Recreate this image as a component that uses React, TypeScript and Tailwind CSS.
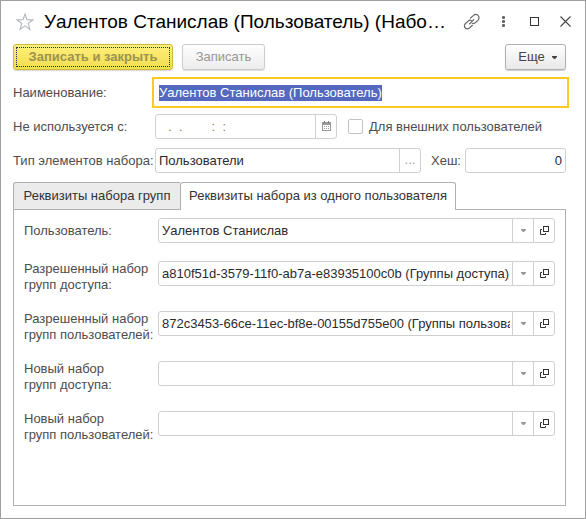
import { useEffect, useRef, type ReactNode } from "react";

const boxClass = "flex h-[25px] min-w-0 overflow-hidden border bg-white";
const plainBoxClass = `${boxClass} rounded-[3px] border-[#d0d0d0]`;
const focusedBoxClass = `${boxClass} border-white outline-2 outline-offset-1 outline-[#fbc926]`;
const fieldClass = "min-w-0 flex-1 bg-transparent pl-[3px] text-[#2b2b2b] outline-none";
const sideButtonClass =
  "flex shrink-0 items-center justify-center border-l border-[#d0d0d0] pb-px";

function StarIcon() {
  return (
    <svg width="18" height="18" viewBox="0 0 18 18" fill="none" stroke="#b3b8bd" strokeWidth="1.1" aria-hidden="true">
      <path d="M9 1 L11 6.8 L16.8 6.9 L12.2 10.5 L13.9 16.4 L9 12.9 L4.1 16.4 L5.8 10.5 L1.2 6.9 L7 6.8 Z" />
    </svg>
  );
}

function LinkIcon() {
  return (
    <svg width="18" height="18" viewBox="0 0 18 18" fill="none" stroke="#666" strokeWidth="1.2" strokeLinecap="round" aria-hidden="true">
      <path d="M7.5 5 L10.3 2.6 C11.5 1.4 13.6 1.1 15 2.4 C16.4 3.7 16.3 5.9 15.1 7.1 L12.3 9.7 C11.5 10.5 10.2 10.7 9.2 10.3" />
      <path d="M9.4 12.3 L6.6 14.9 C5.4 16.1 3.5 16.2 2.3 15 C1.1 13.8 1.1 11.9 2.3 10.7 L5.1 8.1 C6 7.2 7.3 7 8.3 7.5" />
      <path d="M6.6 10.9 L10.8 6.7" />
    </svg>
  );
}

function DotsIcon() {
  return (
    <svg width="3" height="11" viewBox="0 0 3 11" fill="#666" aria-hidden="true">
      <rect width="3" height="3" rx="1" />
      <rect y="4" width="3" height="3" rx="1" />
      <rect y="8" width="3" height="3" rx="1" />
    </svg>
  );
}

function MaximizeIcon() {
  return (
    <svg width="9" height="9" viewBox="0 0 9 9" fill="none" stroke="#333" aria-hidden="true">
      <rect x="0.5" y="0.5" width="8" height="8" />
    </svg>
  );
}

function CloseIcon() {
  return (
    <svg width="11" height="11" viewBox="0 0 11 11" stroke="#444" strokeWidth="1.1" aria-hidden="true">
      <path d="M0.5 0.5 L10.5 10.5 M10.5 0.5 L0.5 10.5" />
    </svg>
  );
}

function CaretIcon() {
  return (
    <svg width="5" height="3" viewBox="0 0 5 3" fill="currentColor" aria-hidden="true">
      <path d="M0 0 H5 V1 L3 3 H2 L0 1 Z" />
    </svg>
  );
}

function CalendarIcon() {
  return (
    <svg width="9" height="10" viewBox="0 0 9 10" aria-hidden="true">
      <path d="M0 1 H9 V10 H0 Z M1 4 V9 H8 V4 Z" fill="#999" fillRule="evenodd" />
      <path d="M2 0 H3 V2 H2 Z M6 0 H7 V2 H6 Z" fill="#777" />
      <path d="M2 5h1v1h-1z M4 5h1v1h-1z M6 5h1v1h-1z M2 7h1v1h-1z M4 7h1v1h-1z M6 7h1v1h-1z" fill="#999" />
    </svg>
  );
}

function OpenIcon() {
  return (
    <svg width="9" height="9" viewBox="0 0 9 9" fill="none" stroke="#333" aria-hidden="true">
      <rect x="3.5" y="0.5" width="5" height="5" />
      <path d="M2 3.5 H0.5 V8.5 H5.5 V7" />
    </svg>
  );
}

function FormRow({ id, label, children }: { id: string; label: string; children: ReactNode }) {
  return (
    <div className="flex items-center">
      <label htmlFor={id} className="w-[142px] shrink-0 whitespace-nowrap">
        {label}
      </label>
      {children}
    </div>
  );
}

function ReferenceRow({ id, lines, value }: { id: string; lines: string[]; value: string }) {
  return (
    <div className="flex items-start">
      <label
        htmlFor={id}
        className="flex min-h-[25px] w-[134px] shrink-0 flex-col justify-center whitespace-nowrap"
      >
        {lines.map((line) => (
          <span key={line}>{line}</span>
        ))}
      </label>
      <div className={`${plainBoxClass} flex-1`}>
        <input id={id} type="text" defaultValue={value} className={`${fieldClass} mr-0.5`} />
        <button type="button" aria-label="Выбрать" className={`${sideButtonClass} w-[21px] text-[#999]`}>
          <CaretIcon />
        </button>
        <button type="button" aria-label="Открыть" className={`${sideButtonClass} w-[21px]`}>
          <OpenIcon />
        </button>
      </div>
    </div>
  );
}

const references = [
  { id: "user", lines: ["Пользователь:"], value: "Уалентов Станислав" },
  {
    id: "allowed-access",
    lines: ["Разрешенный набор", "групп доступа:"],
    value: "a810f51d-3579-11f0-ab7a-e83935100c0b (Группы доступа)",
  },
  {
    id: "allowed-users",
    lines: ["Разрешенный набор", "групп пользователей:"],
    value: "872c3453-66ce-11ec-bf8e-00155d755e00 (Группы пользователей)",
  },
  { id: "new-access", lines: ["Новый набор", "групп доступа:"], value: "" },
  { id: "new-users", lines: ["Новый набор", "групп пользователей:"], value: "" },
];

export default function App() {
  const nameRef = useRef<HTMLInputElement>(null);

  useEffect(() => {
    nameRef.current?.focus();
    nameRef.current?.select();
  }, []);

  return (
    <main className="flex min-h-screen flex-col border border-[#a0a0a0] bg-white px-3 pb-3 font-['Liberation_Sans',Arial,sans-serif] text-[13px] leading-4 text-[#4d4d4d]">
      <header className="flex h-[41px] items-center pl-[3px]">
        <button type="button" aria-label="Добавить в избранное">
          <StarIcon />
        </button>
        <h1 className="ml-[10px] flex-1 truncate text-[19px] leading-6 text-black">
          Уалентов Станислав (Пользователь) (Набо…
        </h1>
        <div className="mr-0.5 flex items-center">
          <button type="button" aria-label="Получить ссылку">
            <LinkIcon />
          </button>
          <button type="button" aria-label="Меню" className="ml-[21px]">
            <DotsIcon />
          </button>
          <button type="button" aria-label="Развернуть" className="ml-[25px]">
            <MaximizeIcon />
          </button>
          <button type="button" aria-label="Закрыть" className="ml-[21px]">
            <CloseIcon />
          </button>
        </div>
      </header>

      <div className="mr-[7px] flex flex-1 flex-col">
        <div className="mt-0.5 flex gap-[9px]">
          <button
            type="button"
            className="h-[26px] w-40 rounded-[3px] border border-[#cbbb45] bg-linear-to-b from-[#fff07a] to-[#f2dc4e] p-0.5 font-bold text-[#9c9352] shadow-[0_1px_1px_#d8d8d8]"
          >
            <span className="flex h-full items-center justify-center border border-dotted border-[#1c2a6b]">
              Записать и закрыть
            </span>
          </button>
          <button
            type="button"
            className="h-[26px] w-[83px] rounded-[3px] border border-[#cccccc] bg-linear-to-b from-white to-[#ececec] text-[#969696] shadow-[0_1px_1px_#dcdcdc]"
          >
            Записать
          </button>
          <button
            type="button"
            className="ml-auto flex h-[26px] w-[61px] items-center justify-center gap-[7px] rounded-[3px] border border-[#b0b0b0] bg-linear-to-b from-white to-[#e8e8e8] pl-1 text-[#444] shadow-[0_1px_1px_#cccccc]"
          >
            Еще
            <CaretIcon />
          </button>
        </div>

        <div className="mt-[10px] flex flex-col gap-[9px]">
          <FormRow id="name" label="Наименование:">
            <div className={`${focusedBoxClass} flex-1`}>
              <input
                ref={nameRef}
                id="name"
                type="text"
                defaultValue="Уалентов Станислав (Пользователь)"
                className={`${fieldClass} selection:bg-[#5468c0] selection:text-white`}
              />
            </div>
          </FormRow>

          <FormRow id="unused-from" label="Не используется с:">
            <div className={`${plainBoxClass} w-[182px]`}>
              <input
                id="unused-from"
                type="text"
                defaultValue={"\u00a0\u00a0.\u00a0\u00a0.\u00a0\u00a0\u00a0\u00a0\u00a0\u00a0\u00a0\u00a0:\u00a0\u00a0:"}
                className="min-w-0 flex-1 pl-[5px] text-[#a8763a] outline-none"
              />
              <button type="button" aria-label="Календарь" className={`${sideButtonClass} w-[21px]`}>
                <CalendarIcon />
              </button>
            </div>
            <label className="ml-[11px] flex items-center gap-[6px] whitespace-nowrap">
              <input
                type="checkbox"
                className="size-[15px] appearance-none rounded-[2px] border border-[#c4c4c4] bg-white"
              />
              Для внешних пользователей
            </label>
          </FormRow>

          <FormRow id="kind" label="Тип элементов набора:">
            <div className={`${plainBoxClass} flex-1`}>
              <input id="kind" type="text" defaultValue="Пользователи" className={fieldClass} />
              <button type="button" aria-label="Выбрать тип" className={`${sideButtonClass} w-[21px] text-[#999]`}>
                ...
              </button>
            </div>
            <label htmlFor="hash" className="ml-[10px] w-[34px] shrink-0">
              Хеш:
            </label>
            <div className={`${plainBoxClass} w-[101px]`}>
              <input id="hash" type="text" defaultValue="0" className={`${fieldClass} pr-[3px] text-right`} />
            </div>
          </FormRow>
        </div>

        <div role="tablist" className="mt-[9px] flex h-7 text-[#333]">
          <button
            type="button"
            role="tab"
            aria-selected="false"
            className="w-[167px] rounded-tl-[3px] border border-r-0 border-[#b0b0b0] bg-[#ebebeb] whitespace-nowrap"
          >
            Реквизиты набора групп
          </button>
          <button
            type="button"
            role="tab"
            aria-selected="true"
            className="w-[276px] rounded-t-[3px] border border-b-0 border-[#b0b0b0] bg-white pb-px whitespace-nowrap"
          >
            Реквизиты набора из одного пользователя
          </button>
          <div className="flex-1 border-b border-[#b0b0b0]" />
        </div>

        <section
          role="tabpanel"
          className="flex flex-1 flex-col gap-[18px] border border-t-0 border-[#b0b0b0] px-[10px] pt-2 pb-4"
        >
          {references.map((row) => (
            <ReferenceRow key={row.id} {...row} />
          ))}
        </section>
      </div>
    </main>
  );
}
